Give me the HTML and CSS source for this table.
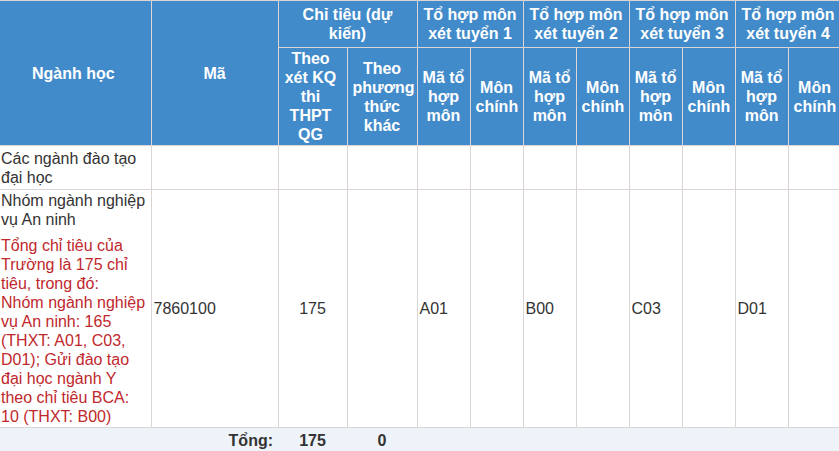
FILE: index.html
```html
<!DOCTYPE html>
<html lang="vi">
<head>
<meta charset="utf-8">
<title>Chỉ tiêu tuyển sinh</title>
<link rel="stylesheet" href="styles.css">
</head>
<body>
<table class="admissions">
  <colgroup>
    <col class="c-name">
    <col class="c-code">
    <col class="c-q1">
    <col class="c-q2">
    <col class="c-s"><col class="c-s">
    <col class="c-s"><col class="c-s">
    <col class="c-s"><col class="c-s">
    <col class="c-s"><col class="c-s">
  </colgroup>
  <thead>
    <tr class="hr1">
      <th rowspan="2">Ngành học</th>
      <th rowspan="2">Mã</th>
      <th colspan="2">Chỉ tiêu (dự kiến)</th>
      <th colspan="2">Tổ hợp môn xét tuyển 1</th>
      <th colspan="2">Tổ hợp môn xét tuyển 2</th>
      <th colspan="2">Tổ hợp môn xét tuyển 3</th>
      <th colspan="2">Tổ hợp môn xét tuyển 4</th>
    </tr>
    <tr class="hr2">
      <th>Theo xét KQ thi THPT QG</th>
      <th>Theo phương thức khác</th>
      <th>Mã tổ hợp môn</th>
      <th>Môn chính</th>
      <th>Mã tổ hợp môn</th>
      <th>Môn chính</th>
      <th>Mã tổ hợp môn</th>
      <th>Môn chính</th>
      <th>Mã tổ hợp môn</th>
      <th>Môn chính</th>
    </tr>
  </thead>
  <tbody>
    <tr class="br1">
      <td>Các ngành đào tạo đại học</td>
      <td></td><td></td><td></td>
      <td></td><td></td><td></td><td></td>
      <td></td><td></td><td></td><td></td>
    </tr>
    <tr class="br2">
      <td>
        <div class="major">Nhóm ngành nghiệp vụ An ninh</div>
        <div class="note">Tổng chỉ tiêu của Trường là 175 chỉ tiêu, trong đó:<br>Nhóm ngành nghiệp vụ An ninh: 165 (THXT: A01, C03, D01); Gửi đào tạo đại học ngành Y theo chỉ tiêu BCA: 10 (THXT: B00)</div>
      </td>
      <td>7860100</td>
      <td class="num">175</td>
      <td></td>
      <td>A01</td><td></td>
      <td>B00</td><td></td>
      <td>C03</td><td></td>
      <td>D01</td><td></td>
    </tr>
  </tbody>
  <tfoot>
    <tr class="fr">
      <td colspan="2" class="total-label">Tổng:</td>
      <td class="num">175</td>
      <td class="num">0</td>
      <td></td><td></td><td></td><td></td>
      <td></td><td></td><td></td><td></td>
    </tr>
  </tfoot>
</table>
</body>
</html>
```

FILE: styles.css
```css
html, body {
  margin: 0;
  padding: 0;
  overflow: hidden;
  background: #ffffff;
}

.admissions {
  table-layout: fixed;
  width: 841px;
  border-collapse: collapse;
  font-family: "Liberation Sans", Arial, sans-serif;
  font-size: 16px;
  line-height: 19px;
  color: #333333;
}

.c-name { width: 151px; }
.c-code { width: 127px; }
.c-q1 { width: 69px; }
.c-q2 { width: 70px; }
.c-s { width: 53px; }

.admissions th,
.admissions td {
  border: 1px solid #dcd5d5;
  vertical-align: middle;
}

.admissions th {
  background: #428bca;
  color: #ffffff;
  font-weight: bold;
  text-align: center;
  padding: 0 5px;
}

.admissions td {
  padding: 0 2px;
  text-align: left;
}

.admissions th:first-child,
.admissions td:first-child {
  border-left: none;
  padding-left: 1px;
}

.hr1 { height: 47px; }
.hr2 { height: 98px; }
.br1 { height: 44px; }
.br2 { height: 238px; }
.fr { height: 26px; }

.note {
  color: #c0282c;
  margin-top: 7px;
}

.admissions td.num {
  text-align: center;
}

.fr td {
  background: #eef2f9;
  border: none;
  font-weight: bold;
}

.admissions td.total-label {
  text-align: right;
  padding-right: 5px;
}
```
